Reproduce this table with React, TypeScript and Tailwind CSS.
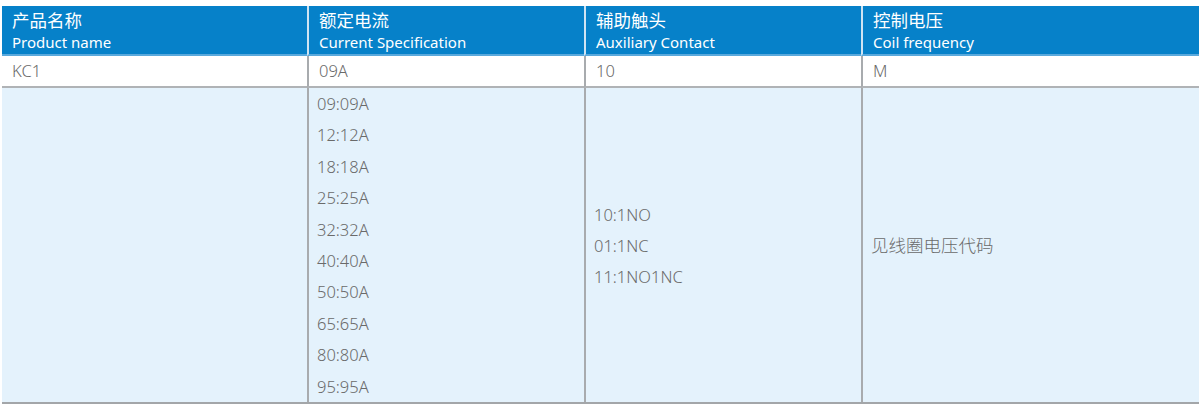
import React from "react";

const font = { fontFamily: '"Noto Sans", "Noto Sans CJK SC", sans-serif' };

export default function App() {
  const specs = ["09:09A", "12:12A", "18:18A", "25:25A", "32:32A", "40:40A", "50:50A", "65:65A", "80:80A", "95:95A"];
  const aux = ["10:1NO", "01:1NC", "11:1NO1NC"];
  const headers = [
    ["产品名称", "Product name"],
    ["额定电流", "Current Specification"],
    ["辅助触头", "Auxiliary Contact"],
    ["控制电压", "Coil frequency"],
  ];
  return (
    <div className="w-[1200px] h-[408px] bg-white pt-[6px] pl-[2px] pr-[1px]" style={font}>
      <div className="grid grid-cols-[305px_277px_277px_1fr] border-b-2 border-[#a3a6a9]">
        {headers.map(([zh, en], i) => (
          <div
            key={i}
            className={`h-[50px] bg-[#0681c9] text-white px-[10px] pt-[2px] border-b-2 border-[#5aa9dc] ${i > 0 ? "border-l-2 border-l-[#cfe4f3]" : ""}`}
          >
            <div className="text-[17.5px] leading-[24px]">{zh}</div>
            <div className="text-[15px] leading-[20px]">{en}</div>
          </div>
        ))}
        {["KC1", "09A", "10", "M"].map((t, i) => (
          <div
            key={i}
            className={`h-[32px] flex items-center px-[10px] text-[16.5px] text-[#6a6a6a] font-light bg-white border-b-2 border-[#b0b3b6] ${i > 0 ? "border-l-2 border-l-[#a8abae]" : ""}`}
          >
            {t}
          </div>
        ))}
        <div className="bg-[#e4f2fc]" />
        <div className="bg-[#e4f2fc] border-l-2 border-[#a8abae] px-[8px] text-[16.5px] text-[#6a6a6a] font-light">
          {specs.map((s) => (
            <div key={s} className="leading-[31.4px]">{s}</div>
          ))}
        </div>
        <div className="bg-[#e4f2fc] border-l-2 border-[#a8abae] px-[8px] text-[16.5px] text-[#6a6a6a] font-light flex flex-col justify-center">
          {aux.map((s) => (
            <div key={s} className="leading-[31px]">{s}</div>
          ))}
        </div>
        <div className="bg-[#e4f2fc] border-l-2 border-[#a8abae] px-[8px] text-[17.5px] text-[#6a6a6a] font-light flex items-center">
          见线圈电压代码
        </div>
      </div>
    </div>
  );
}
